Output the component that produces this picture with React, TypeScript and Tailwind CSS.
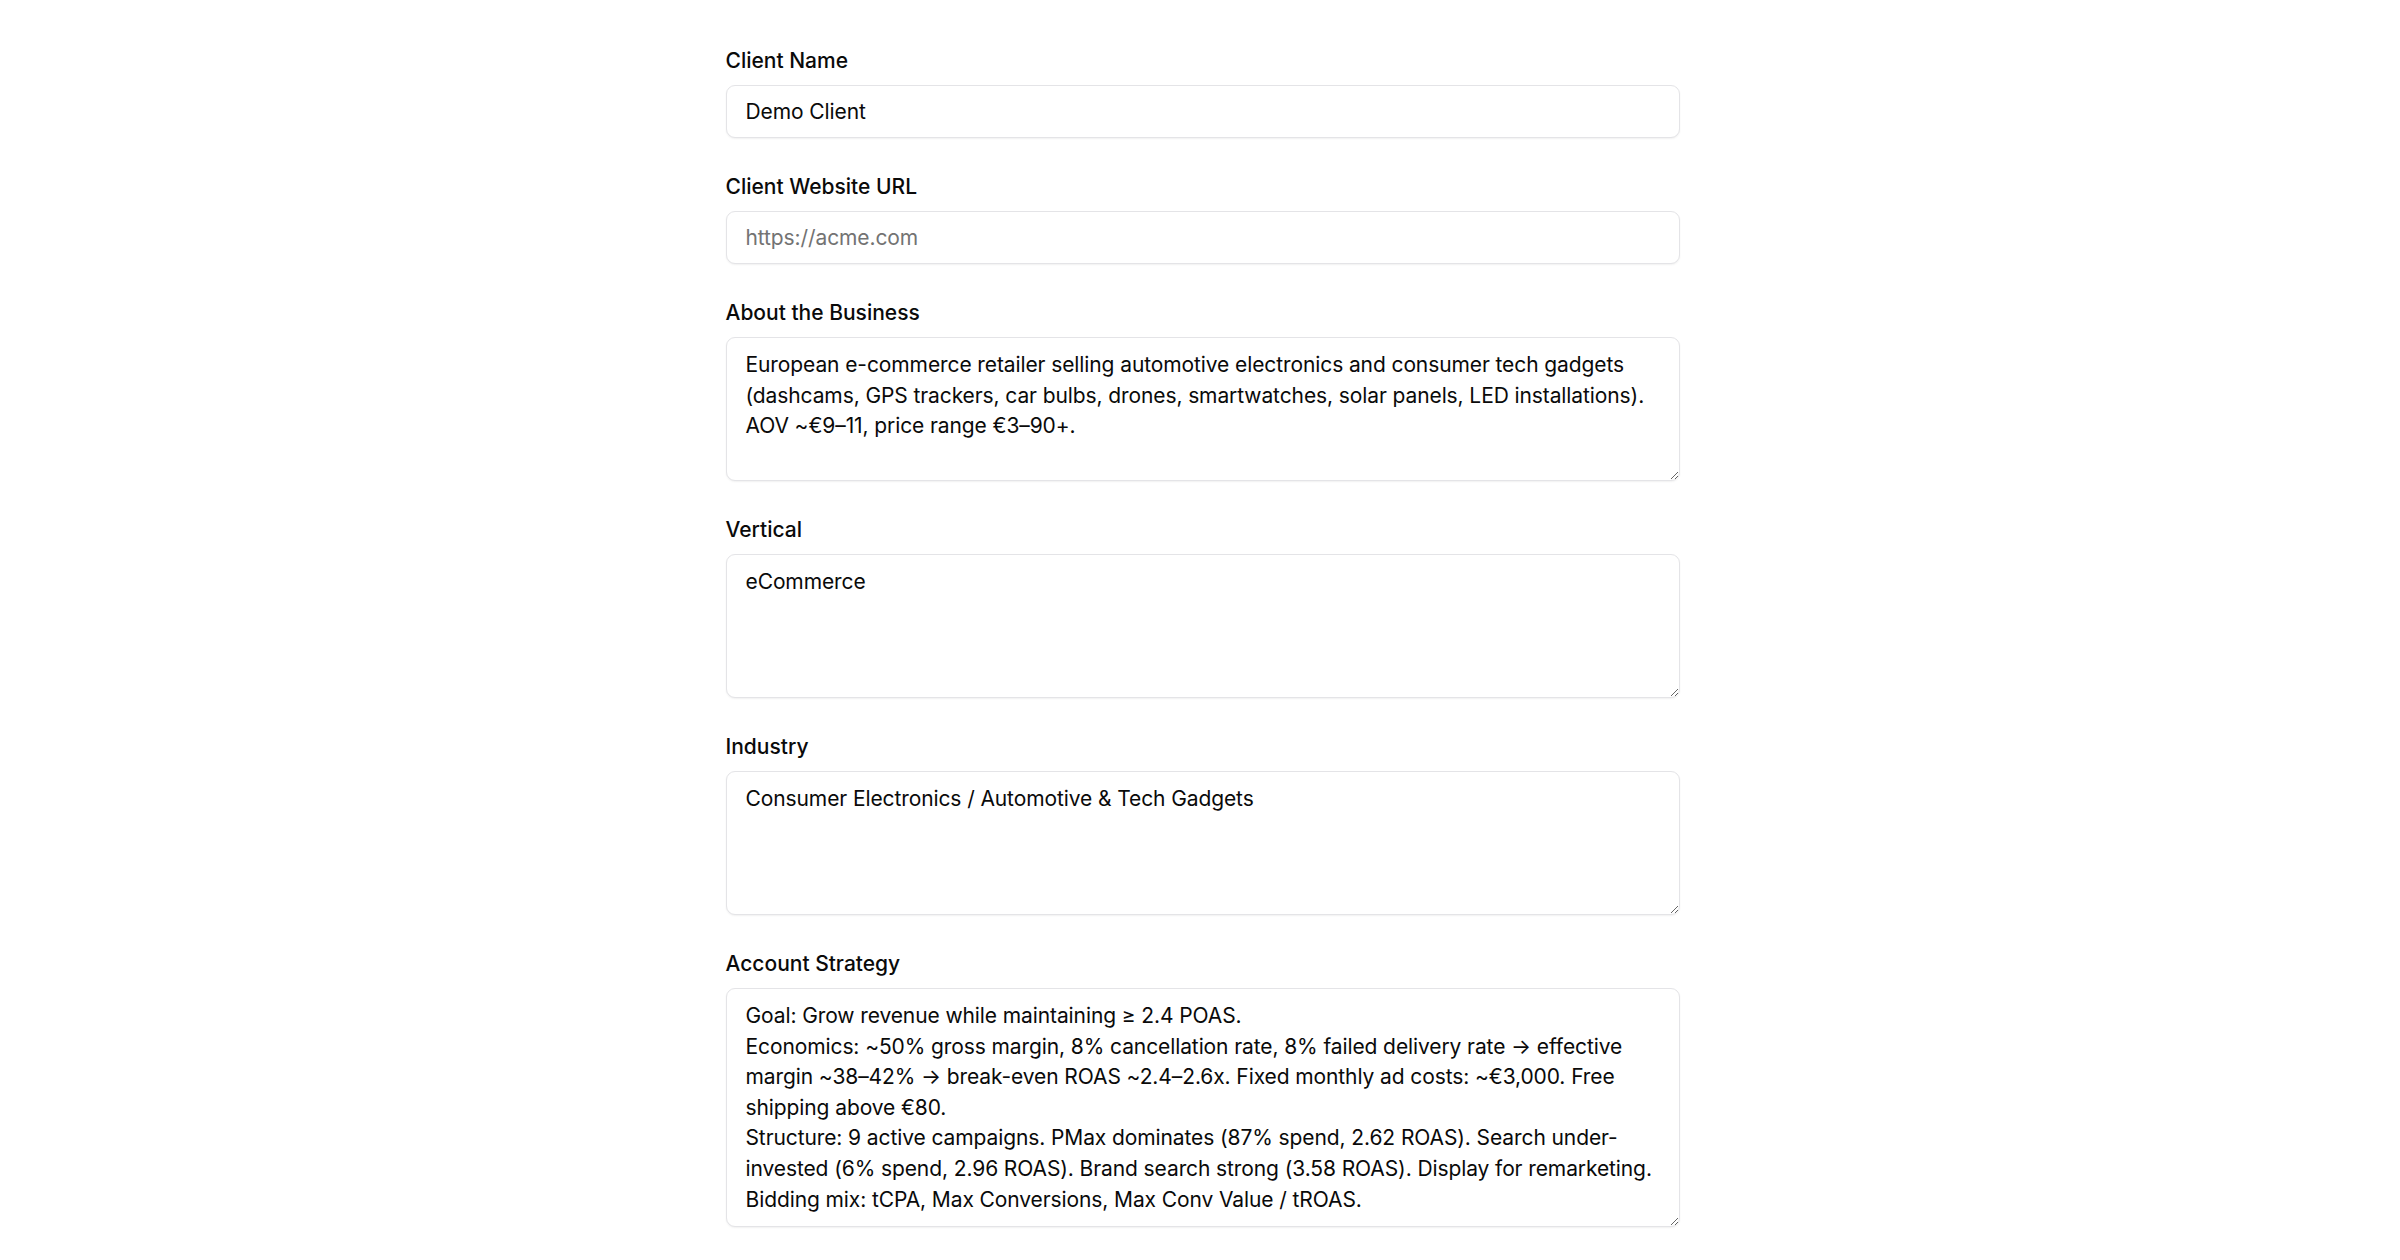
import React, { useState } from "react";

type Field = {
  id: string;
  label: string;
  value: string;
  placeholder?: string;
  multiline?: boolean;
  tall?: boolean;
};

const FIELDS: Field[] = [
  { id: "clientName", label: "Client Name", value: "Demo Client" },
  {
    id: "clientUrl",
    label: "Client Website URL",
    value: "",
    placeholder: "https://acme.com",
  },
  {
    id: "about",
    label: "About the Business",
    multiline: true,
    value:
      "European e-commerce retailer selling automotive electronics and consumer tech gadgets (dashcams, GPS trackers, car bulbs, drones, smartwatches, solar panels, LED installations). AOV ~€9–11, price range €3–90+.",
  },
  { id: "vertical", label: "Vertical", multiline: true, value: "eCommerce" },
  {
    id: "industry",
    label: "Industry",
    multiline: true,
    value: "Consumer Electronics / Automotive & Tech Gadgets",
  },
  {
    id: "strategy",
    label: "Account Strategy",
    multiline: true,
    tall: true,
    value:
      "Goal: Grow revenue while maintaining ≥ 2.4 POAS.\nEconomics: ~50% gross margin, 8% cancellation rate, 8% failed delivery rate → effective margin ~38–42% → break-even ROAS ~2.4–2.6x. Fixed monthly ad costs: ~€3,000. Free shipping above €80.\nStructure: 9 active campaigns. PMax dominates (87% spend, 2.62 ROAS). Search under-invested (6% spend, 2.96 ROAS). Brand search strong (3.58 ROAS). Display for remarketing.\nBidding mix: tCPA, Max Conversions, Max Conv Value / tROAS.",
  },
];

const fieldBase =
  "w-full rounded-[9px] border border-[#e4e4e7] bg-white px-[19px] text-[21px] tracking-[-0.1px] text-[#0a0a0a] shadow-[0_1px_2px_rgba(0,0,0,0.06)] outline-none placeholder:text-[#737373]";

const App: React.FC = () => {
  const [values, setValues] = useState<Record<string, string>>(
    Object.fromEntries(FIELDS.map((f) => [f.id, f.value]))
  );

  const update = (id: string, v: string) =>
    setValues((prev) => ({ ...prev, [id]: v }));

  return (
    <div className="min-h-screen bg-white pl-[5px] font-['Inter','Liberation_Sans',sans-serif] text-[#0a0a0a]">
      <form className="mx-auto flex w-[954px] flex-col gap-[34px] pt-[46px] pb-[40px]">
        {FIELDS.map((f) => (
          <div key={f.id} className="flex flex-col gap-[9px]">
            <label
              htmlFor={f.id}
              className="text-[21px] leading-[30px] font-medium text-[#0a0a0a]"
            >
              {f.label}
            </label>
            {f.multiline ? (
              <textarea
                id={f.id}
                value={values[f.id]}
                onChange={(e) => update(f.id, e.target.value)}
                className={`${fieldBase} overflow-hidden pt-[12px] pb-[10px] leading-[30.6px] ${
                  f.tall ? "h-[239px]" : "h-[144px]"
                }`}
              />
            ) : (
              <input
                id={f.id}
                type="text"
                value={values[f.id]}
                placeholder={f.placeholder}
                onChange={(e) => update(f.id, e.target.value)}
                className={`${fieldBase} h-[53px] leading-[30px]`}
              />
            )}
          </div>
        ))}
      </form>
    </div>
  );
};

export default App;
